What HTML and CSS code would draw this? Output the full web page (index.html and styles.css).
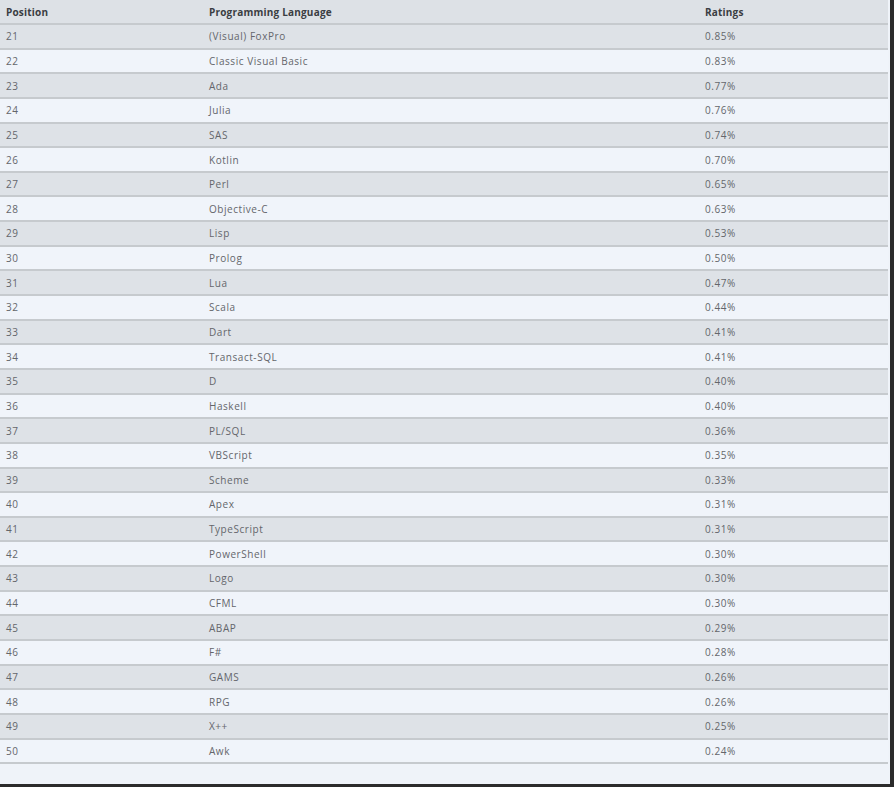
FILE: index.html
```html
<!DOCTYPE html>
<html lang="en">
<head>
    <meta charset="UTF-8">
    <meta name="viewport" content="width=device-width, initial-scale=1.0">
    <title>Programming Language Ratings</title>
    <link rel="stylesheet" href="styles.css">
</head>
<body>

    <div class="panel">
        <table class="ratings">
            <thead>
                <tr>
                    <th class="col-pos">Position</th>
                    <th class="col-lang">Programming Language</th>
                    <th class="col-rate">Ratings</th>
                </tr>
            </thead>
            <tbody>
                <tr><td>21</td><td>(Visual) FoxPro</td><td>0.85%</td></tr>
                <tr><td>22</td><td>Classic Visual Basic</td><td>0.83%</td></tr>
                <tr><td>23</td><td>Ada</td><td>0.77%</td></tr>
                <tr><td>24</td><td>Julia</td><td>0.76%</td></tr>
                <tr><td>25</td><td>SAS</td><td>0.74%</td></tr>
                <tr><td>26</td><td>Kotlin</td><td>0.70%</td></tr>
                <tr><td>27</td><td>Perl</td><td>0.65%</td></tr>
                <tr><td>28</td><td>Objective-C</td><td>0.63%</td></tr>
                <tr><td>29</td><td>Lisp</td><td>0.53%</td></tr>
                <tr><td>30</td><td>Prolog</td><td>0.50%</td></tr>
                <tr><td>31</td><td>Lua</td><td>0.47%</td></tr>
                <tr><td>32</td><td>Scala</td><td>0.44%</td></tr>
                <tr><td>33</td><td>Dart</td><td>0.41%</td></tr>
                <tr><td>34</td><td>Transact-SQL</td><td>0.41%</td></tr>
                <tr><td>35</td><td>D</td><td>0.40%</td></tr>
                <tr><td>36</td><td>Haskell</td><td>0.40%</td></tr>
                <tr><td>37</td><td>PL/SQL</td><td>0.36%</td></tr>
                <tr><td>38</td><td>VBScript</td><td>0.35%</td></tr>
                <tr><td>39</td><td>Scheme</td><td>0.33%</td></tr>
                <tr><td>40</td><td>Apex</td><td>0.31%</td></tr>
                <tr><td>41</td><td>TypeScript</td><td>0.31%</td></tr>
                <tr><td>42</td><td>PowerShell</td><td>0.30%</td></tr>
                <tr><td>43</td><td>Logo</td><td>0.30%</td></tr>
                <tr><td>44</td><td>CFML</td><td>0.30%</td></tr>
                <tr><td>45</td><td>ABAP</td><td>0.29%</td></tr>
                <tr><td>46</td><td>F#</td><td>0.28%</td></tr>
                <tr><td>47</td><td>GAMS</td><td>0.26%</td></tr>
                <tr><td>48</td><td>RPG</td><td>0.26%</td></tr>
                <tr><td>49</td><td>X++</td><td>0.25%</td></tr>
                <tr><td>50</td><td>Awk</td><td>0.24%</td></tr>
            </tbody>
        </table>
    </div>

</body>
</html>
```
FILE: styles.css
```css
body {
    margin: 0;
    background-color: #2b2b2b;
    font-family: "Open Sans", Arial, sans-serif;
    height: 787px;
    overflow: hidden;
}

.panel {
    width: 890px;
    height: 784px;
    background-color: #eff3f9;
}

.ratings {
    width: 888px;
    border-collapse: collapse;
    table-layout: fixed;
}

.ratings th,
.ratings td {
    text-align: left;
    padding: 0 0 0 6px;
    font-size: 10px;
    border-bottom: 2px solid #c6cace;
    white-space: nowrap;
}

.ratings th {
    height: 23px;
    font-weight: 700;
    letter-spacing: 0.2px;
    color: #3a3d42;
    background-color: #dde1e6;
}

.ratings td {
    height: 22.65px;
    letter-spacing: 0.55px;
    color: #64666b;
}

.col-pos {
    width: 197px;
}

.col-lang {
    width: 490px;
}

.ratings tbody tr:nth-child(odd) {
    background-color: #dee2e7;
}

.ratings tbody tr:nth-child(even) {
    background-color: #f0f4fa;
}
```
